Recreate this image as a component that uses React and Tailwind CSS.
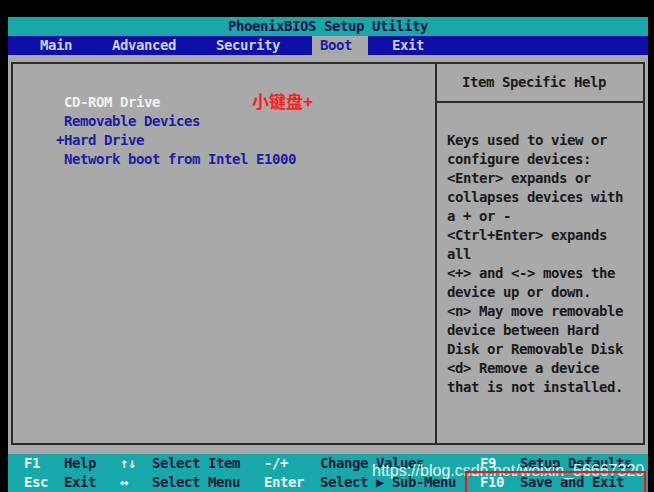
const mono = "font-['DejaVu_Sans_Mono','Liberation_Mono',monospace] font-bold text-[14px] tracking-[-0.43px] leading-[19px]";

const helpLines = [
  "Keys used to view or",
  "configure devices:",
  "<Enter> expands or",
  "collapses devices with",
  "a + or -",
  "<Ctrl+Enter> expands",
  "all",
  "<+> and <-> moves the",
  "device up or down.",
  "<n> May move removable",
  "device between Hard",
  "Disk or Removable Disk",
  "<d> Remove a device",
  "that is not installed.",
];

const footer = [
  ["F1", "Help", "↑↓", "Select Item", "-/+", "Change Values", "F9", "Setup Defaults"],
  ["Esc", "Exit", "↔", "Select Menu", "Enter", "Select ▶ Sub-Menu", "F10", "Save and Exit"],
];

const FooterRow = ({ cells }) => (
  <div className="flex h-[19px] pl-[16px] items-center whitespace-pre">
    <span className="w-[40px] text-[#eef4f4]">{cells[0]}</span>
    <span className="w-[56px] text-[#121a3c]">{cells[1]}</span>
    <span className="w-[32px] text-[#eef4f4]">{cells[2]}</span>
    <span className="w-[112px] text-[#121a3c]">{cells[3]}</span>
    <span className="w-[56px] text-[#eef4f4]">{cells[4]}</span>
    <span className="w-[160px] text-[#121a3c]">{cells[5]}</span>
    <span className="w-[40px] text-[#eef4f4]">{cells[6]}</span>
    <span className="text-[#121a3c]">{cells[7]}</span>
  </div>
);

export default function App() {
  return (
    <div className="relative w-[654px] h-[492px] bg-black pt-[17px] pl-[8px] overflow-hidden">
      <div className={`w-[640px] flex flex-col ${mono}`}>
        {/* Title */}
        <div className="h-[19px] bg-[#17a9a9] text-[#101048] text-center">PhoenixBIOS Setup Utility</div>

        {/* Menu bar */}
        <div className="h-[19px] bg-[#0e0ea8] text-[#cfcfea] flex pl-[32px]">
          <span className="w-[72px]">Main</span>
          <span className="w-[104px]">Advanced</span>
          <span className="w-[96px]">Security</span>
          <span className="w-[56px] px-[8px] bg-[#a9a9a9] text-[#1c1ca4]">Boot</span>
          <span className="ml-[24px]">Exit</span>
        </div>

        {/* Body */}
        <div className="h-[399px] bg-[#a9a9a9] pt-[7px] pb-[9px] px-[3px]">
          <div className="h-full border-2 border-[#2a2a2a] flex">
            {/* Boot order */}
            <div className="w-[422px] pt-[29px] pl-[43px] whitespace-pre">
              <div className="flex items-center h-[19px]">
                <span className="text-[#f2f2f2]"> CD-ROM Drive</span>
                <span className="ml-[92px] -mt-[4px] text-[#ff1c1c] font-['Noto_Sans_CJK_SC',sans-serif] text-[17px] leading-[19px] tracking-normal font-bold">小键盘+</span>
              </div>
              <div className="text-[#1c1ca4]"> Removable Devices</div>
              <div className="text-[#1c1ca4]">+Hard Drive</div>
              <div className="text-[#1c1ca4]"> Network boot from Intel E1000</div>
            </div>

            {/* Help */}
            <div className="flex-1 border-l-2 border-[#2a2a2a] flex flex-col">
              <div className="h-[39px] border-b-2 border-[#2a2a2a] flex items-center pl-[25px] text-[#1a1a1a]">
                Item Specific Help
              </div>
              <div className="pt-[28px] pl-[10px] text-[#1a1a1a] whitespace-pre">
                {helpLines.map((l) => (
                  <div key={l}>{l}</div>
                ))}
              </div>
            </div>
          </div>
        </div>

        {/* Footer */}
        <div className="bg-[#17a9a9] h-[38px]">
          <FooterRow cells={footer[0]} />
          <FooterRow cells={footer[1]} />
        </div>
      </div>

      {/* Watermark + annotation overlays */}
      <div className="absolute left-[372px] top-[461px] text-white/90 font-['Liberation_Sans',sans-serif] text-[16px] leading-[20px]">
        https://blog.csdn.net/weixin_56667320
      </div>
      <div className="absolute left-[465px] top-[471px] w-[181px] h-[30px] border-2 border-[#ff1010]" />
    </div>
  );
}
